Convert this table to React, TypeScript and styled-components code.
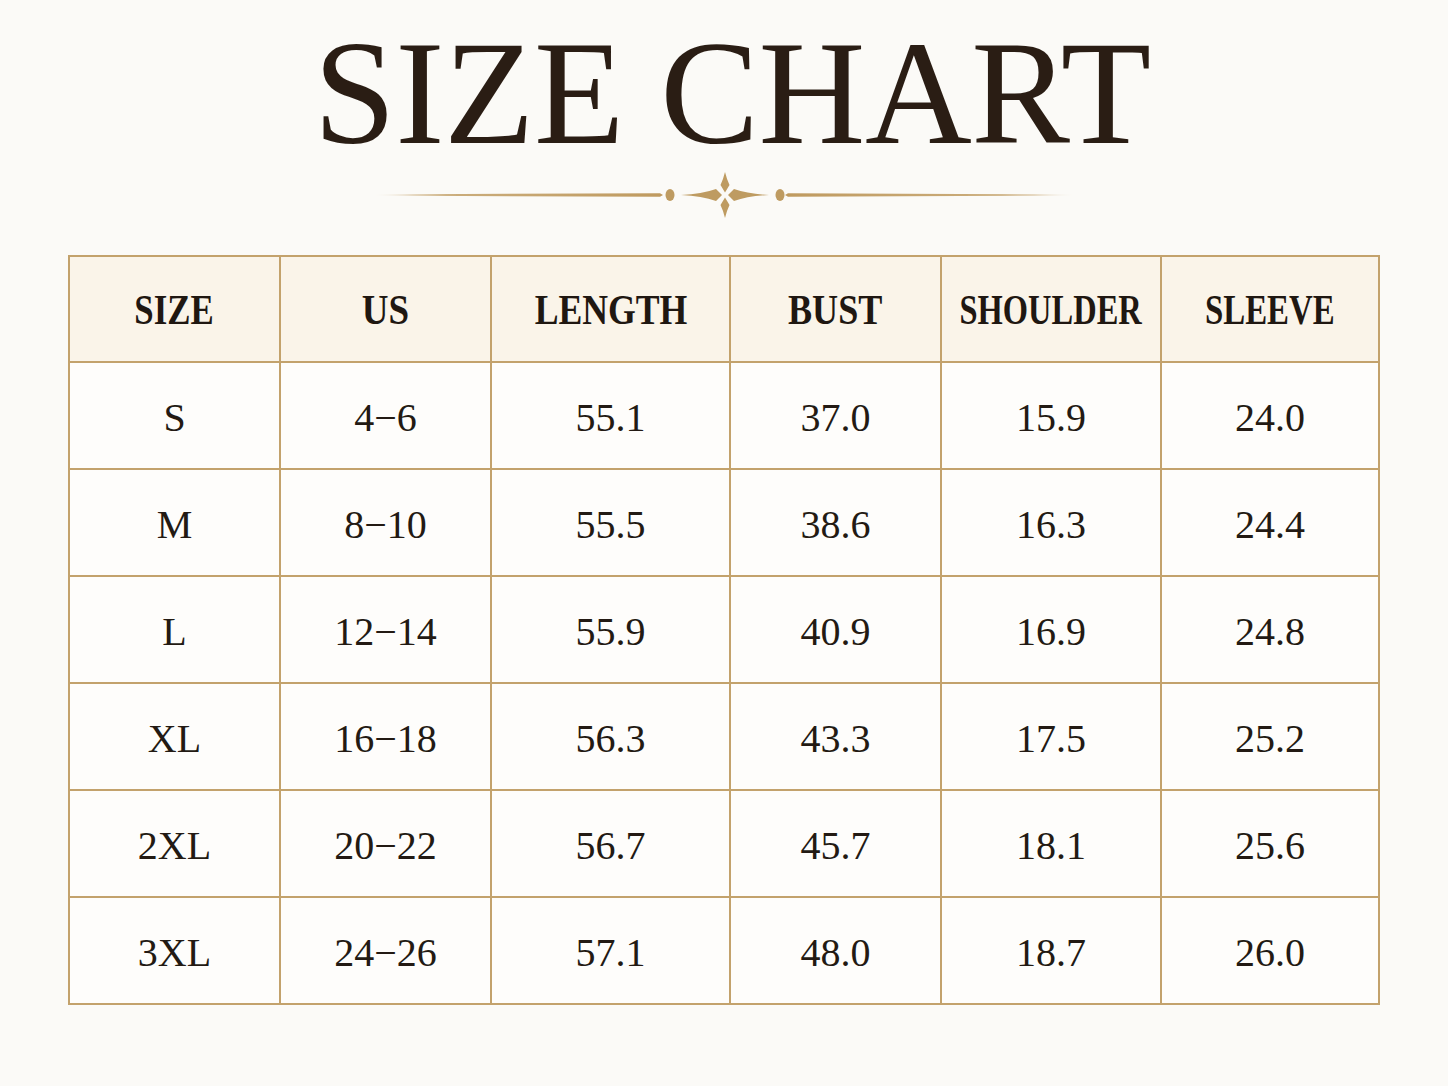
import React from "react";
import styled, { createGlobalStyle } from "styled-components";

const GlobalStyle = createGlobalStyle`
	html, body {
		margin: 0;
		padding: 0;
		background: #fbfaf7;
	}
	body {
		font-family: "Liberation Serif", "Times New Roman", serif;
		color: #231a13;
	}
`;

const Page = styled.main`
	width: 1448px;
	height: 1086px;
	box-sizing: border-box;
	padding-top: 19px;
	display: flex;
	flex-direction: column;
	align-items: center;
	overflow: hidden;
`;

const Title = styled.h1`
	margin: 0 0 0 16px;
	font-family: "Liberation Serif", "Times New Roman", serif;
	font-weight: 400;
	font-size: 148px;
	line-height: 1;
	letter-spacing: -0.5px;
	color: #2a1d14;
	white-space: nowrap;
`;

const Ornament = styled.svg`
	display: block;
	margin-top: 3px;
	width: 700px;
	height: 50px;
`;

const Table = styled.div`
	margin-top: 35px;
	display: grid;
	grid-template-columns: 209px 209px 237px 209px 218px 216px;
	grid-template-rows: 104px repeat(6, 105px);
	gap: 2px;
	border: 2px solid #c3a26c;
	background: #c3a26c;
`;

const Cell = styled.div<{ $head?: boolean }>`
	display: flex;
	align-items: center;
	justify-content: center;
	padding-top: ${(p) => (p.$head ? "0" : "3px")};
	box-sizing: border-box;
	background: ${(p) => (p.$head ? "#faf4e9" : "#fefdfb")};
	color: ${(p) => (p.$head ? "#1f1711" : "#231a13")};
	font-size: ${(p) => (p.$head ? "43px" : "40px")};
	font-weight: ${(p) => (p.$head ? 700 : 400)};
	white-space: nowrap;
`;

const HeadLabel = styled.span<{ $squeeze: number }>`
	display: inline-block;
	transform: scaleX(${(p) => p.$squeeze});
`;

const columns = [
	{ label: "SIZE", squeeze: 0.81 },
	{ label: "US", squeeze: 0.86 },
	{ label: "LENGTH", squeeze: 0.83 },
	{ label: "BUST", squeeze: 0.84 },
	{ label: "SHOULDER", squeeze: 0.755 },
	{ label: "SLEEVE", squeeze: 0.765 },
];

const rows = [
	["S", "4−6", "55.1", "37.0", "15.9", "24.0"],
	["M", "8−10", "55.5", "38.6", "16.3", "24.4"],
	["L", "12−14", "55.9", "40.9", "16.9", "24.8"],
	["XL", "16−18", "56.3", "43.3", "17.5", "25.2"],
	["2XL", "20−22", "56.7", "45.7", "18.1", "25.6"],
	["3XL", "24−26", "57.1", "48.0", "18.7", "26.0"],
];

const Divider = () => (
	<Ornament viewBox="0 0 700 50">
		<defs>
			<linearGradient id="fadeL" x1="0" x2="1" y1="0" y2="0">
				<stop offset="0" stopColor="#c29f66" stopOpacity="0.05" />
				<stop offset="0.25" stopColor="#c29f66" stopOpacity="0.85" />
				<stop offset="1" stopColor="#bf9a5f" />
			</linearGradient>
			<linearGradient id="fadeR" x1="1" x2="0" y1="0" y2="0">
				<stop offset="0" stopColor="#c29f66" stopOpacity="0.05" />
				<stop offset="0.25" stopColor="#c29f66" stopOpacity="0.85" />
				<stop offset="1" stopColor="#bf9a5f" />
			</linearGradient>
		</defs>
		<path d="M0 25 L40 24.2 L286 23.3 L289 25 L286 26.7 L40 25.8 Z" fill="url(#fadeL)" />
		<path d="M700 25 L660 24.2 L414 23.3 L411 25 L414 26.7 L660 25.8 Z" fill="url(#fadeR)" />
		<g fill="#be9b61">
			<ellipse cx="296" cy="25" rx="4.5" ry="6" />
			<ellipse cx="406" cy="25" rx="4.5" ry="6" />
			<path d="M307 25 Q328 24 342 19 L348 25 L342 31 Q328 26 307 25 Z" />
			<path d="M395 25 Q374 24 360 19 L354 25 L360 31 Q374 26 395 25 Z" />
			<path d="M351 2 Q353 10 355.5 15 L351 22.5 L346.5 15 Q349 10 351 2 Z" />
			<path d="M351 48 Q353 40 355.5 35 L351 27.5 L346.5 35 Q349 40 351 48 Z" />
		</g>
	</Ornament>
);

const App = () => {
	return (
		<>
			<GlobalStyle />
			<Page>
				<Title>SIZE CHART</Title>
				<Divider />
				<Table>
					{columns.map((c) => (
						<Cell $head key={c.label}>
							<HeadLabel $squeeze={c.squeeze}>{c.label}</HeadLabel>
						</Cell>
					))}
					{rows.map((r) =>
						r.map((v, i) => <Cell key={r[0] + i}>{v}</Cell>)
					)}
				</Table>
			</Page>
		</>
	);
};

export default App;
